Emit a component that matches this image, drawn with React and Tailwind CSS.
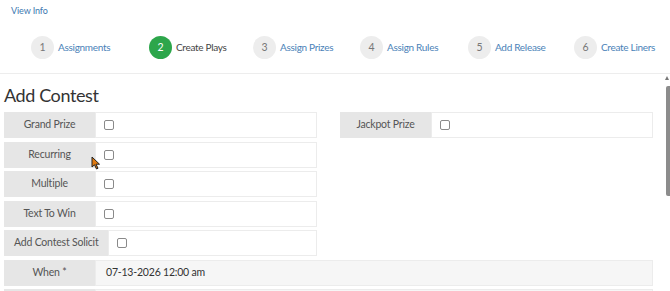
import React from "react";

const steps = [
  { n: 1, label: "Assignments", w: "w-[118px]" },
  { n: 2, label: "Create Plays", active: true, w: "w-[104px]" },
  { n: 3, label: "Assign Prizes", w: "w-[107px]" },
  { n: 4, label: "Assign Rules", w: "w-[108px]" },
  { n: 5, label: "Add Release", w: "w-[106px]" },
  { n: 6, label: "Create Liners", w: "w-[90px]" },
];

function Check() {
  return <span className="block w-[10px] h-[10px] border border-[#8a8a8a] rounded-[2px] bg-white" />;
}

function Row({ label, wide, children, gray }) {
  return (
    <div className="flex h-[26px]">
      <div
        className={
          "flex items-center justify-center bg-[#e6e6e6] text-[10.5px] tracking-[-0.2px] text-[#555] shrink-0 " +
          (wide ? "px-[10px] min-w-[91px]" : "w-[91px]")
        }
      >
        {label}
      </div>
      <div
        className={
          "flex-1 flex items-center border border-[#ececec] pl-[8px] " +
          (gray ? "bg-[#f6f6f6]" : "bg-white")
        }
      >
        {children}
      </div>
    </div>
  );
}

export default function App() {
  return (
    <div
      className="w-[670px] h-[291px] overflow-hidden bg-white relative"
      style={{ fontFamily: "Lato, 'Noto Sans', sans-serif" }}
    >
      <div className="h-[23px] pl-[11px] pt-[5px] text-[9px] tracking-[-0.1px] text-[#3b78b0] leading-[12px]">View Info</div>
      <div className="flex pl-[31px] h-[51px] items-center border-b border-[#ededed] pb-[1px]">
        {steps.map((s) => (
          <div key={s.n} className={"flex items-center gap-[4px] shrink-0 " + s.w}>
            <span
              className={
                "w-[23px] h-[23px] rounded-full flex items-center justify-center text-[10.5px] " +
                (s.active ? "bg-[#2da64b] text-white" : "bg-[#ededed] text-[#777]")
              }
            >
              {s.n}
            </span>
            <span
              className={
                "text-[10px] tracking-[-0.3px] whitespace-nowrap " + (s.active ? "text-[#444]" : "text-[#4a82b8]")
              }
            >
              {s.label}
            </span>
          </div>
        ))}
      </div>

      <div className="pl-[4px] w-[653px]">
        <h1 className="text-[18px] text-[#333] leading-[24px] mt-[9px] mb-[5px] tracking-[-0.4px]">Add Contest</h1>
        <div className="flex flex-col gap-[3.5px]">
          <div className="grid grid-cols-2 gap-[23px]">
            <div className="flex flex-col gap-[3.5px]">
              <Row label="Grand Prize"><Check /></Row>
              <Row label="Recurring"><Check /></Row>
              <Row label="Multiple"><Check /></Row>
              <Row label="Text To Win"><Check /></Row>
              <Row label="Add Contest Solicit" wide><Check /></Row>
            </div>
            <div className="flex flex-col gap-[3.5px]">
              <Row label="Jackpot Prize"><Check /></Row>
            </div>
          </div>
          <Row label="When *" gray>
            <span className="text-[10.5px] tracking-[-0.2px] text-[#333] pl-[2px]">07-13-2026 12:00 am</span>
          </Row>
          <Row label="" gray />
        </div>
      </div>

      {/* scrollbar */}
      <div className="absolute right-[1px] top-[76px] w-0 h-0 border-l-[2px] border-r-[2px] border-b-[4px] border-l-transparent border-r-transparent border-b-[#777]" />
      <div className="absolute right-0 top-[86px] w-[4px] h-[110px] bg-[#8c8c8c] rounded-l-[2px]" />

      {/* cursor */}
      <svg className="absolute left-[91px] top-[156px]" width="10" height="14" viewBox="0 0 10 14">
        <path d="M1 1 L1 11 L3.5 8.8 L5.5 13 L7 12.3 L5 8.2 L8.5 8.2 Z" fill="#e07a10" stroke="#222" strokeWidth="1" />
      </svg>
    </div>
  );
}
